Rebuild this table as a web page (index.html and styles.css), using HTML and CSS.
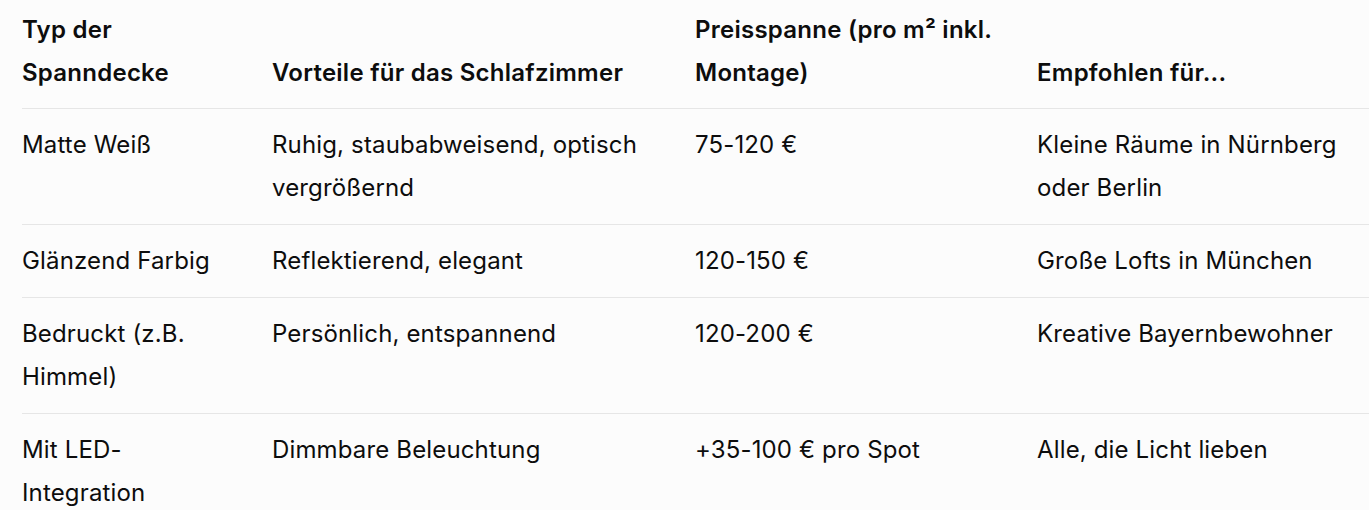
FILE: index.html
```html
<!DOCTYPE html>
<html lang="de">
<head>
<meta charset="utf-8">
<title>Spanndecken</title>
<link rel="stylesheet" href="styles.css">
</head>
<body>
<div class="wrap">
<table class="tbl">
  <colgroup>
    <col class="c1"><col class="c2"><col class="c3"><col class="c4">
  </colgroup>
  <thead>
    <tr>
      <th>Typ der Spanndecke</th>
      <th>Vorteile für das Schlafzimmer</th>
      <th>Preisspanne (pro m² inkl. Montage)</th>
      <th>Empfohlen für...</th>
    </tr>
  </thead>
  <tbody>
    <tr>
      <td>Matte Weiß</td>
      <td>Ruhig, staubabweisend, optisch vergrößernd</td>
      <td>75-120 €</td>
      <td>Kleine Räume in Nürnberg oder Berlin</td>
    </tr>
    <tr>
      <td>Glänzend Farbig</td>
      <td>Reflektierend, elegant</td>
      <td>120-150 €</td>
      <td>Große Lofts in München</td>
    </tr>
    <tr>
      <td>Bedruckt (z.B. Himmel)</td>
      <td>Persönlich, entspannend</td>
      <td>120-200 €</td>
      <td>Kreative Bayernbewohner</td>
    </tr>
    <tr>
      <td>Mit LED-Integration</td>
      <td>Dimmbare Beleuchtung</td>
      <td>+35-100 € pro Spot</td>
      <td>Alle, die Licht lieben</td>
    </tr>
  </tbody>
</table>
</div>
</body>
</html>
```
FILE: styles.css
```css
html, body {
  margin: 0;
  padding: 0;
  background: #fcfcfc;
}
body {
  font-family: "Inter", "Noto Sans", sans-serif;
  color: #0d0d0d;
  font-size: 24px;
  line-height: 43px;
  letter-spacing: 0.15px;
  overflow: hidden;
}
.wrap {
  padding-left: 22px;
  width: 1400px;
}
.tbl {
  border-collapse: collapse;
  table-layout: fixed;
  width: 1400px;
}
.c1 { width: 250px; }
.c2 { width: 423px; }
.c3 { width: 342px; }
.c4 { width: 385px; }
.tbl th, .tbl td {
  text-align: left;
  vertical-align: top;
  padding: 14px 40px 15px 0;
  border-bottom: 1px solid #e6e6e6;
}
.tbl td:last-child, .tbl th:last-child {
  padding-right: 50px;
}
.tbl th {
  font-weight: 600;
  letter-spacing: 0.25px;
  padding-top: 8px;
  padding-bottom: 14px;
  vertical-align: bottom;
}
.tbl tbody tr:last-child td {
  border-bottom: none;
}
```
